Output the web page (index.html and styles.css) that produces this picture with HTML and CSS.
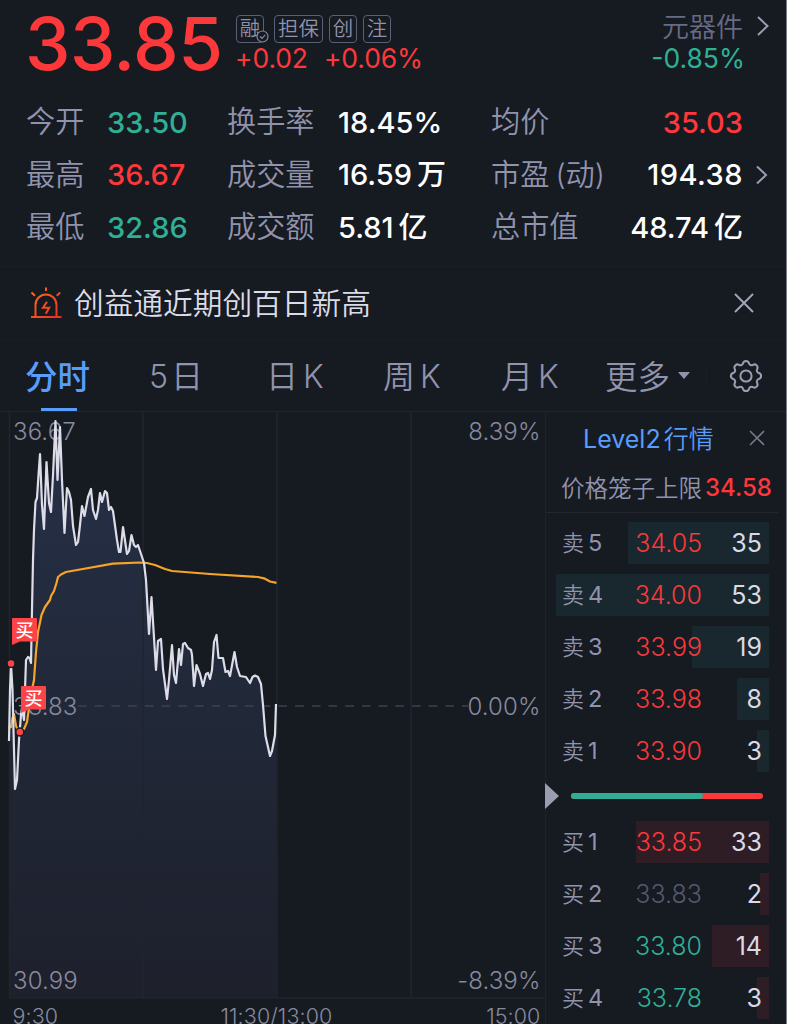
FILE: index.html
```html
<!DOCTYPE html>
<html lang="zh-CN">

<head>
  <meta charset="UTF-8" />
  <meta name="viewport" content="width=device-width, initial-scale=1" />
  <title>创益通 - 分时</title>
  <link rel="stylesheet" href="styles.css">
</head>

<body>
  <div class="page">
    <header class="quote">
      <div class="price">33.85</div>
      <div class="quote-info">
        <div class="tags">
          <span class="tag tag-check">融
            <svg class="check" width="13" height="13" viewBox="0 0 13 13">
              <circle cx="6.5" cy="6.5" r="5.5" />
              <path d="M4 6.5 L6 8.3 L9.2 4.8" />
            </svg>
          </span>
          <span class="tag wide">担保</span>
          <span class="tag">创</span>
          <span class="tag">注</span>
        </div>
        <div class="change"><span>+0.02</span><span>+0.06%</span></div>
      </div>
      <div class="sector">
        <div class="sector-name">元器件</div>
        <div class="sector-change">-0.85%</div>
      </div>
      <svg class="arrow" width="14" height="22" viewBox="0 0 14 22">
        <path d="M2 2 L11.5 11 L2 20" />
      </svg>
    </header>

    <section class="stats">
      <span class="label">今开</span><span class="value first green">33.50</span>
      <span class="label">换手率</span><span class="value white">18.45%</span>
      <span class="label">均价</span><span class="value last red">35.03</span>
      <span></span>

      <span class="label">最高</span><span class="value first red">36.67</span>
      <span class="label">成交量</span><span class="value white">16.59<i>万</i></span>
      <span class="label">市盈<b>(</b>动<b class="close-paren">)</b></span><span class="value last pe white">194.38</span>
      <svg class="arrow small" width="14" height="22" viewBox="0 0 14 22">
        <path d="M2 2.5 L11 11 L2 19.5" />
      </svg>

      <span class="label">最低</span><span class="value first green">32.86</span>
      <span class="label">成交额</span><span class="value white">5.81<i>亿</i></span>
      <span class="label">总市值</span><span class="value last white">48.74<i>亿</i></span>
      <span></span>
    </section>

    <section class="notice">
      <svg class="alarm" width="32" height="32" viewBox="0 0 32 32">
        <defs>
          <linearGradient id="fire" gradientUnits="userSpaceOnUse" x1="4" y1="6" x2="30" y2="30">
            <stop offset="0" stop-color="#f86a1c" />
            <stop offset="1" stop-color="#ee2c22" />
          </linearGradient>
        </defs>
        <path d="M1 30 H31.5" />
        <path d="M5.5 30 V18 A10.5 10.5 0 0 1 26.5 18 V30" />
        <path d="M16 0.5 V4 M1.5 5.5 L5 8.8 M30.2 5.5 L26.7 8.8" />
        <path d="M17 14.8 L13 20.8 H19.2 L15.8 26.8" />
      </svg>
      <span class="notice-text">创益通近期创百日新高</span>
      <svg class="close" width="20" height="20" viewBox="0 0 20 20">
        <path d="M1 1 L19 19 M19 1 L1 19" />
      </svg>
    </section>

    <nav class="tabs">
      <span class="tab active">分时</span>
      <span class="tab day5">5<em>日</em></span>
      <span class="tab">日<em>K</em></span>
      <span class="tab week">周<em>K</em></span>
      <span class="tab month">月<em>K</em></span>
      <span class="tab more">更多</span>
      <span class="caret"></span>
      <span class="divider"></span>
      <svg class="gear" width="36" height="36" viewBox="-18 -18 36 36">
        <circle r="5.6" />
        <path id="gearPath" d="" />
      </svg>
    </nav>

    <main class="main">
      <div class="chart">
        <svg width="545" height="612" viewBox="0 412 545 612">
          <defs>
            <linearGradient id="area" gradientUnits="userSpaceOnUse" x1="0" y1="420" x2="0" y2="998">
              <stop offset="0" stop-color="#263047" />
              <stop offset="0.5" stop-color="#212838" />
              <stop offset="1" stop-color="#1e202c" />
            </linearGradient>
          </defs>
          <path id="areaPath" fill="url(#area)" />
          <path class="grid" d="M9.5 412 V998 M143 412 V998 M277 412 V998 M411 412 V998 M9 998 H545" />
          <path class="base" d="M78 706 H468" />
          <g class="axis">
            <text x="13" y="440">36.67</text>
            <text x="13" y="715">33.83</text>
            <text x="13" y="989">30.99</text>
            <text class="end" x="540.5" y="440">8.39%</text>
            <text class="end" x="540.5" y="715">0.00%</text>
            <text class="end" x="540.5" y="989">-8.39%</text>
          </g>
          <g class="axis time">
            <text x="12.5" y="1023.5">9:30</text>
            <text class="mid" x="276.5" y="1023.5">11:30/13:00</text>
            <text class="end" x="540.5" y="1023.5">15:00</text>
          </g>
          <polyline class="avg" points="9,728 11,727 12.5,718 14,714 16,726 19,732 24,729 27,722 29,708 31,694 34,680 36,652 38,632 41.5,615 45,607 50,600 51,596 54,591 56.5,583 58,577 61,574.5 66,572 80,569.5 113,563.7 140,562.5 147,563 155,565 165,569 172,571 210,574 258,577 264,578.3 270,581.5 276.5,582.8" />
          <polyline class="line" id="priceLine" points="9,741 10,690 11,664 12.5,690 15,789 17,780 19,740 21,715 22,708 24,720 25,690 26,660 28,657 29.5,658 31,663 32,610 33,560 34,530 35.5,502 37,498 38.5,475 40,454 42,505 44,529 46.5,462 49,503 51,512 53,475 55.5,421 57.5,480 60,427 62,480 64.5,533 67,488 69,492 71,500 73,526 76,545 78,542 80,525 82,506 84.5,516 88,497 91,489 93,510 96,519 98,510 100,493 102,502 105,491 107,493 109,510 111,507 113,511 117,540 119,552 120.5,552 123,527 127,554 129,551 131.5,535 134,545 136,547 138,545 141,554 144,563 146,580 149,634 151.5,597 156,670 158,641 161,639 163,669 167,699 169,680 172,645 174,675 176,683 179,649 181,665 183,644 185,643 188,648 191,650 192,655 194,686 196.5,665 200,674 203,686 206,674 208,673 210,679 212,670 214,642 216.5,635 218.5,658 223,658 225.5,672 228,671 230,676 234.5,652 237,667 240,676 246,677 250,683 252.5,677 255,675.5 258,677 261,684 263,705 265.5,736 270,756 272,751 275,735 276,704" />
          <g class="flags">
            <path d="M12 619 a1 1 0 0 1 1 -1 h23 a1 1 0 0 1 1 1 v21.5 a1 1 0 0 1 -1 1 h-16 l-8 3.5 z" />
            <text x="24.5" y="636.5">买</text>
            <path d="M21 687 a1 1 0 0 1 1 -1 h23 a1 1 0 0 1 1 1 v21.5 a1 1 0 0 1 -1 1 h-16 l-8 3.5 z" />
            <text x="33.5" y="704.5">买</text>
            <circle cx="11" cy="663.5" r="4" />
            <circle cx="19.8" cy="732" r="4" />
          </g>
        </svg>
      </div>

      <aside class="book">
        <div class="book-head">
          <span>Level2<em>行情</em></span>
          <svg class="close" width="16" height="16" viewBox="0 0 16 16">
            <path d="M1 1 L15 15 M15 1 L1 15" />
          </svg>
        </div>
        <div class="cage">价格笼子上限<span>34.58</span></div>
        <div class="orders sell">
          <div class="order"><div class="depth" style="width: 141px"></div><span class="side">卖<em>5</em></span><span class="cost red">34.05</span><span class="qty">35</span></div>
          <div class="order"><div class="depth" style="width: 213px"></div><span class="side">卖<em>4</em></span><span class="cost red">34.00</span><span class="qty">53</span></div>
          <div class="order"><div class="depth" style="width: 77px"></div><span class="side">卖<em>3</em></span><span class="cost red">33.99</span><span class="qty">19</span></div>
          <div class="order"><div class="depth" style="width: 32px"></div><span class="side">卖<em>2</em></span><span class="cost red">33.98</span><span class="qty">8</span></div>
          <div class="order"><div class="depth" style="width: 12px"></div><span class="side">卖<em>1</em></span><span class="cost red">33.90</span><span class="qty">3</span></div>
        </div>
        <div class="ratio">
          <span class="handle"></span>
          <div class="ratio-bar"><div class="ratio-sell" style="width: 132px"></div></div>
        </div>
        <div class="orders buy">
          <div class="order"><div class="depth" style="width: 133px"></div><span class="side">买<em>1</em></span><span class="cost red">33.85</span><span class="qty">33</span></div>
          <div class="order"><div class="depth" style="width: 9px"></div><span class="side">买<em>2</em></span><span class="cost flat">33.83</span><span class="qty">2</span></div>
          <div class="order"><div class="depth" style="width: 57px"></div><span class="side">买<em>3</em></span><span class="cost green">33.80</span><span class="qty">14</span></div>
          <div class="order"><div class="depth" style="width: 12px"></div><span class="side">买<em>4</em></span><span class="cost green">33.78</span><span class="qty">3</span></div>
        </div>
      </aside>
    </main>
  </div>

  <script src="chart.js"></script>
</body>

</html>
```
FILE: styles.css
```css
* {
  margin: 0;
  padding: 0;
  box-sizing: border-box;
}

body {
  font-family: Inter, 'Noto Sans CJK SC', sans-serif;
  background: #161a21;
  color: #9193ad;
  overflow: hidden;
}

i,
em,
b {
  font-style: normal;
  font-weight: inherit;
}

svg {
  display: block;
  flex: none;
}

.page {
  width: 787px;
  height: 1024px;
  overflow: hidden;
  border-right: 1px solid #7b7d82;
}

.red {
  color: #fc383b;
}

.green {
  color: #2fb095;
}

.white {
  color: #fff;
}

.flat {
  color: #55586f;
}

/* header */
.quote {
  display: flex;
  height: 96px;
  padding: 0 16px 0 25px;
}

.price {
  width: 211px;
  font-size: 72.5px;
  line-height: 88px;
  font-weight: 500;
  letter-spacing: -0.5px;
  color: #fc383b;
}

.tags {
  display: flex;
  gap: 6px;
  padding-top: 15px;
}

.tag {
  position: relative;
  width: 28px;
  height: 28px;
  border: 1px solid #5c5f78;
  border-radius: 4px;
  font-size: 20.5px;
  line-height: 26px;
  font-weight: 350;
  text-align: center;
  white-space: nowrap;
}

.tag.wide {
  width: 49px;
}

.tag-check {
  margin-right: 4px;
}

.check {
  position: absolute;
  right: -6px;
  bottom: -1px;
  fill: #161a21;
  stroke: #85879f;
  stroke-width: 1.2;
}

.change {
  display: flex;
  gap: 16px;
  margin-top: -1px;
  margin-left: -1px;
  font-size: 26.5px;
  line-height: 32px;
  letter-spacing: -0.1px;
  color: #fc383b;
}

.sector {
  margin-left: auto;
  text-align: right;
}

.sector-name {
  padding-top: 11px;
  font-size: 27px;
  line-height: 34px;
  font-weight: 350;
  color: #686b86;
}

.sector-change {
  margin-top: -3px;
  margin-right: -2px;
  font-size: 26.5px;
  line-height: 32px;
  color: #2fb095;
}

.arrow {
  margin: 15px 0 0 13px;
  fill: none;
  stroke: #9b9db3;
  stroke-width: 2;
}

.arrow.small {
  margin: 0 0 0 12px;
}

/* figures */
.stats {
  display: grid;
  grid-template-columns: 81px 120px 111px 153px 130px 122px 43px;
  grid-auto-rows: 52.5px;
  align-items: center;
  height: 170px;
  padding-left: 26px;
  font-size: 29px;
}

.label {
  font-size: 29.2px;
  font-weight: 350;
  line-height: 36px;
  white-space: nowrap;
}

.label b {
  margin-left: 6px;
}

.label .close-paren {
  margin-left: 0;
}

.value {
  padding-top: 1px;
  font-weight: 500;
  line-height: 36px;
  white-space: nowrap;
}

.value.first {
  font-weight: 450;
}

.value i {
  margin-left: 5px;
}

.last {
  justify-self: end;
}

.pe {
  letter-spacing: 0.5px;
}

/* notice */
.notice {
  display: flex;
  align-items: center;
  height: 74px;
  padding: 0 32px 0 30px;
  border-top: 1px solid #1d1d27;
  border-bottom: 1px solid #1d1d27;
}

.alarm {
  fill: none;
  stroke: url(#fire);
  stroke-width: 2;
}

.notice-text {
  margin-left: 12px;
  padding-bottom: 4px;
  font-size: 29.7px;
  font-weight: 350;
  color: #dcdce8;
}

.close {
  margin-left: auto;
  fill: none;
  stroke: #a2a3ba;
  stroke-width: 2;
}

/* tabs */
.tabs {
  display: flex;
  align-items: center;
  height: 72px;
  padding-left: 25px;
  border-bottom: 1px solid #23262f;
  font-size: 32px;
  font-weight: 350;
}

.tab {
  position: relative;
  width: 117px;
  padding-bottom: 3px;
  white-space: nowrap;
}

.tab em {
  margin-left: 5px;
}

.day5 em {
  margin-left: 3px;
}

.active {
  width: 124px;
  font-size: 32.5px;
  color: #589dfc;
  font-weight: 500;
}

.active::after {
  content: "";
  position: absolute;
  left: 16px;
  bottom: -10px;
  width: 36px;
  height: 3px;
  background: #589dfc;
}

.week {
  width: 118px;
}

.month {
  width: 104px;
}

.more {
  width: 72px;
  font-size: 32.5px;
}

.caret {
  margin-left: 1px;
  border: 6px solid transparent;
  border-top: 7px solid #9193ad;
  border-bottom: 0;
}

.divider {
  width: 1px;
  height: 25px;
  margin-left: 16px;
  background: #1d1d27;
}

.gear {
  margin-left: auto;
  margin-right: 22px;
  fill: none;
  stroke: #9b9db3;
  stroke-width: 2;
  stroke-linejoin: round;
}

/* chart */
.main {
  display: flex;
  height: 612px;
}

.chart {
  width: 545px;
}

.grid {
  fill: none;
  stroke: #22252f;
  stroke-width: 1.5;
}

.base {
  fill: none;
  stroke: #3d4054;
  stroke-width: 1.5;
  stroke-dasharray: 8.7 8;
}

.axis text {
  font-size: 24px;
  font-weight: 300;
  letter-spacing: 0.1px;
  fill: #878a9f;
}

.time text {
  font-size: 21.5px;
}

.axis .end {
  text-anchor: end;
}

.axis .mid {
  text-anchor: middle;
}

.line,
.avg {
  fill: none;
  stroke: #dddde9;
  stroke-width: 2.2;
  stroke-linejoin: round;
}

.avg {
  stroke: #f7a428;
}

.flags path {
  fill: #fc4448;
}

.flags text {
  font-size: 18px;
  font-weight: 500;
  fill: #fff;
  text-anchor: middle;
}

.flags circle {
  fill: #fc4448;
  stroke: #161a21;
  stroke-width: 1.5;
}

/* order book */
.book {
  width: 241px;
  border-left: 1.5px solid #20232d;
}

.book-head {
  display: flex;
  align-items: center;
  height: 53px;
  margin-right: 8px;
  padding-left: 37px;
  border-bottom: 1px solid #1b1a23;
  font-size: 25px;
  color: #589dfc;
}

.book-head span {
  padding-bottom: 2px;
}

.book-head em {
  margin-left: 3px;
  font-weight: 350;
}

.book-head .close {
  margin-right: 13px;
  stroke: #777a8c;
  stroke-width: 1.6;
}

.cage {
  display: flex;
  align-items: center;
  height: 48px;
  margin-right: 8px;
  padding: 0 0 4px 15px;
  border-bottom: 1.5px solid #23262f;
  font-size: 23.5px;
  font-weight: 350;
  white-space: nowrap;
}

.cage span {
  margin-left: 3px;
  padding-top: 2px;
  font-size: 24px;
  font-weight: 500;
  color: #fc383b;
}

.orders {
  display: flex;
  flex-direction: column;
  gap: 10px;
  padding: 9px 17px 0 10px;
}

.order {
  position: relative;
  display: flex;
  align-items: center;
  height: 42px;
  padding: 0 7px 0 6px;
  font-size: 25px;
}

.order span {
  position: relative;
}

.depth {
  position: absolute;
  top: 0;
  right: 0;
  height: 42px;
  background: #19282e;
}

.buy .depth {
  background: #2e1d24;
}

.side {
  width: 61px;
  padding-bottom: 4px;
  font-size: 22px;
  font-weight: 350;
}

.side em {
  margin-left: 4px;
  font-size: 23.5px;
  font-weight: 400;
}

.cost {
  width: 79px;
  text-align: right;
  font-weight: 350;
}

.qty {
  flex: 1;
  text-align: right;
  color: #d9dae5;
}

.ratio {
  display: flex;
  align-items: center;
  height: 48px;
}

.handle {
  margin-left: -1px;
  border: 13px solid transparent;
  border-left: 14px solid #9b9db0;
  border-right: 0;
}

.ratio-bar {
  width: 192px;
  height: 6px;
  margin-left: 12px;
  border-radius: 3px;
  background: #fc383b;
  overflow: hidden;
}

.ratio-sell {
  height: 6px;
  border-radius: 0 3px 3px 0;
  background: #30ad94;
}

.buy {
  padding-top: 1px;
}
```
FILE: chart.js
```js
// fill below the price line
const points = document.getElementById('priceLine').getAttribute('points');
document.getElementById('areaPath').setAttribute('d', `M9 998 L${points} L277 704 L277 998 Z`);

// gear outline: eight round teeth joined by small hollows
const at = (deg) => {
  const a = (deg * Math.PI) / 180;
  return `${(13.2 * Math.sin(a)).toFixed(2)} ${(-13.2 * Math.cos(a)).toFixed(2)}`;
};
let d = `M${at(-13)} `;
for (let i = 0; i < 8; i++) {
  const deg = i * 45;
  d += `A3.1 3.1 0 0 1 ${at(deg + 13)} A2.7 2.7 0 0 0 ${at(deg + 32)} `;
}
document.getElementById('gearPath').setAttribute('d', d + 'Z');
```
